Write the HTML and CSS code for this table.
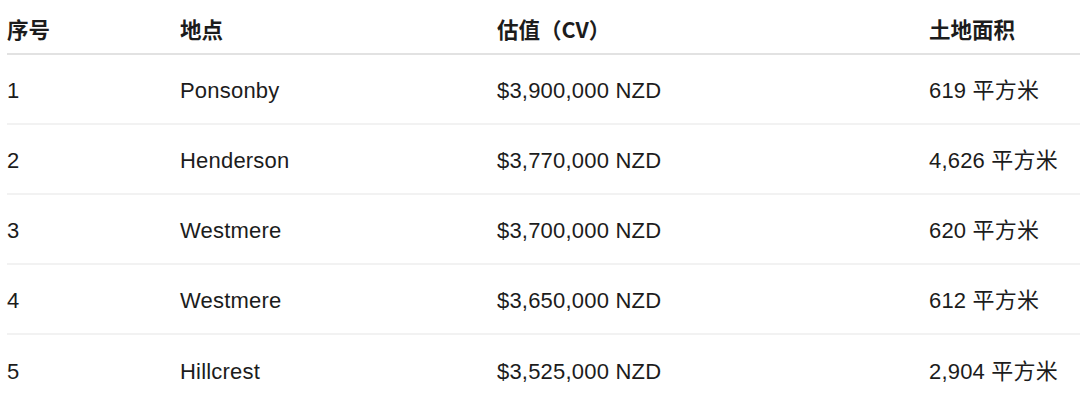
FILE: index.html
```html
<!DOCTYPE html>
<html lang="zh">
<head>
<meta charset="utf-8">
<link rel="stylesheet" href="styles.css">
</head>
<body>
<table class="data">
  <colgroup>
    <col class="c1"><col class="c2"><col class="c3"><col class="c4">
  </colgroup>
  <thead>
    <tr><th>序号</th><th>地点</th><th>估值（CV）</th><th>土地面积</th></tr>
  </thead>
  <tbody>
    <tr><td>1</td><td>Ponsonby</td><td>$3,900,000 NZD</td><td>619 平方米</td></tr>
    <tr><td>2</td><td>Henderson</td><td>$3,770,000 NZD</td><td>4,626 平方米</td></tr>
    <tr><td>3</td><td>Westmere</td><td>$3,700,000 NZD</td><td>620 平方米</td></tr>
    <tr><td>4</td><td>Westmere</td><td>$3,650,000 NZD</td><td>612 平方米</td></tr>
    <tr><td>5</td><td>Hillcrest</td><td>$3,525,000 NZD</td><td>2,904 平方米</td></tr>
  </tbody>
</table>
</body>
</html>
```
FILE: styles.css
```css
html, body {
  margin: 0;
  padding: 0;
  background: #ffffff;
}
body {
  font-family: "Liberation Sans", "Noto Sans CJK SC", sans-serif;
  font-size: 22px;
  letter-spacing: 0.2px;
  color: #1c1c1c;
  overflow: hidden;
}
.data {
  margin-left: 7px;
  width: 1073px;
  border-collapse: collapse;
  table-layout: fixed;
}
.c1 { width: 173px; }
.c2 { width: 317px; }
.c3 { width: 432px; }
.c4 { width: 151px; }
.data th, .data td {
  text-align: left;
  padding: 0;
  white-space: nowrap;
  font-weight: normal;
  box-sizing: border-box;
}
.data th {
  font-family: "Noto Sans CJK SC", "Liberation Sans", sans-serif;
  font-size: 21.5px;
  letter-spacing: 0;
  font-weight: 600;
  height: 54px;
  padding-top: 5px;
  vertical-align: middle;
  line-height: 1;
}
.data thead tr {
  border-bottom: 2px solid #e2e2e2;
}
.data td {
  height: 70px;
  padding-top: 4px;
  vertical-align: middle;
  line-height: 1;
}
.data tbody tr {
  border-bottom: 2px solid #f2f2f2;
}
.data tbody tr:last-child {
  border-bottom: none;
}
```
